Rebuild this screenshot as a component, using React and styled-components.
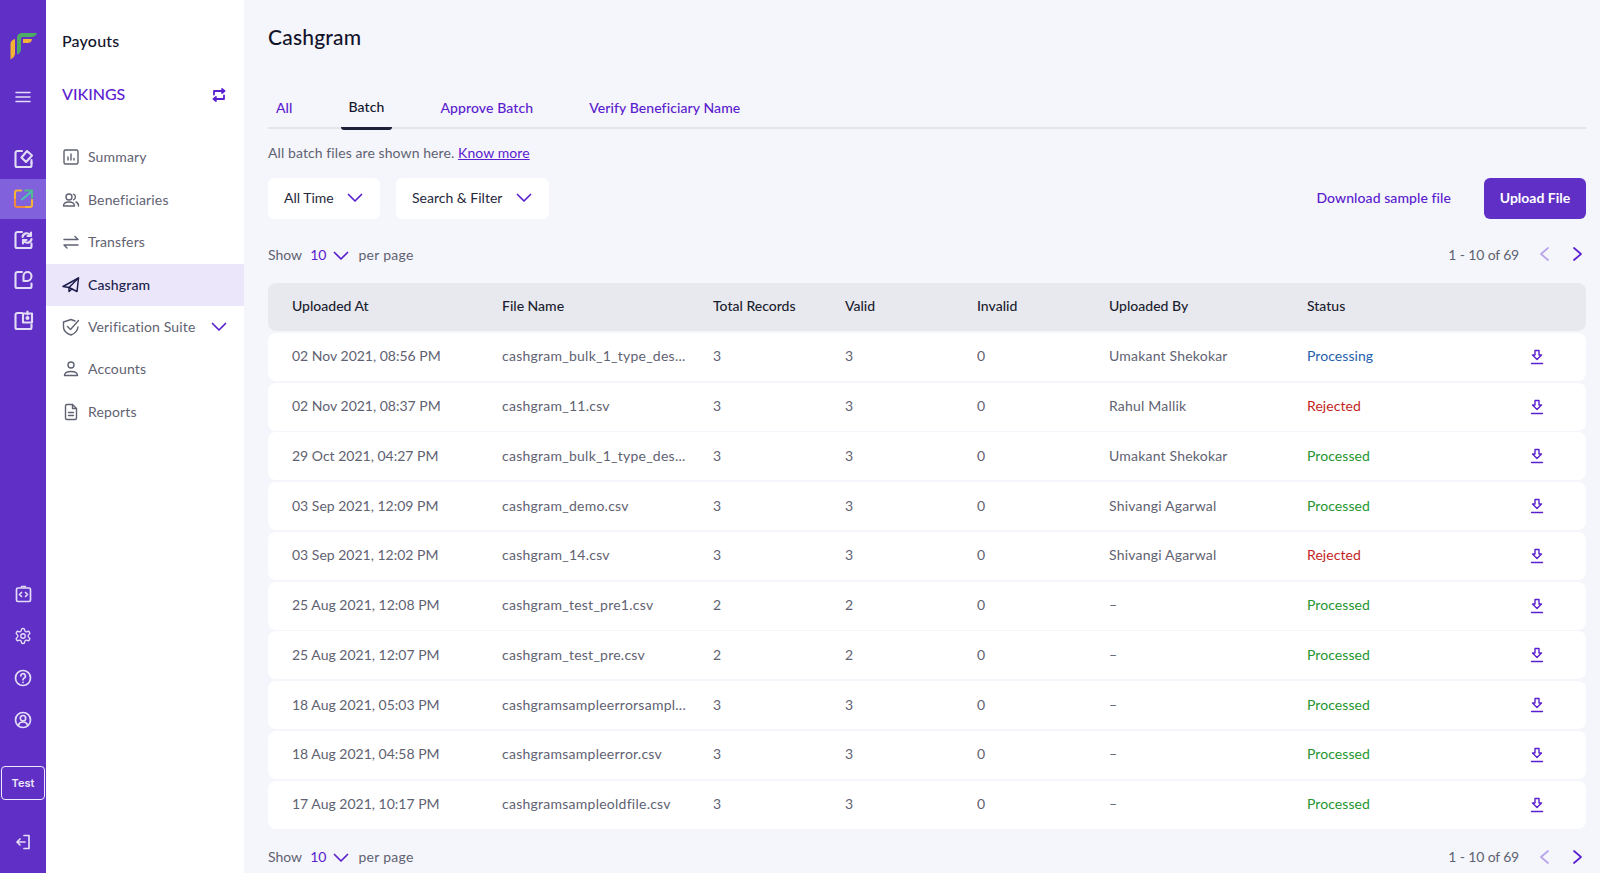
import React from "react";
import styled, { createGlobalStyle } from "styled-components";

const PURPLE = "#5a20cf";
const GREY = "#5f6272";
const DARK = "#12142b";
const RAIL = "#6030c6";

const Global = createGlobalStyle`
  html, body { margin: 0; padding: 0; height: 100%; overflow: hidden; background: #f5f6fb; }
  body { font-family: Lato, "Open Sans", sans-serif; font-size: 14px; color: ${GREY}; }
  * { box-sizing: border-box; }
`;

const Page = styled.div`display: flex; height: 873px; width: 1600px; overflow: hidden;`;

const Rail = styled.aside`
  width: 46px; flex: none; background: ${RAIL}; display: flex; flex-direction: column; align-items: center;
  padding-top: 32px; color: #e3dcf6;
`;
const LogoBox = styled.div`height: 28px; display: flex; margin-bottom: 27px;`;
const RailGroup = styled.div`display: flex; flex-direction: column; width: 100%; margin-top: ${p => p.$top}px;`;
const RailItem = styled.div`
  height: ${p => p.$h}px; display: flex; align-items: center; justify-content: center;
  background: ${p => (p.$active ? "#8161dc" : "transparent")};
`;
const Burger = styled.div`height: 20px; display: flex; align-items: center;`;
const TestBox = styled.div`
  width: 44px; height: 34px; margin-top: 25px; border: 1.5px solid #efeafb; border-radius: 4px; color: #efeafb;
  font: 600 11px Inter, sans-serif; display: flex; align-items: center; justify-content: center;
`;
const LogoutBox = styled.div`margin-top: 34px; display: flex;`;

const Side = styled.nav`width: 198px; flex: none; background: #fff; display: flex; flex-direction: column;`;
const SideTitle = styled.div`
  padding: 31px 0 0 16px; height: 73px; font-size: 16px; font-weight: 500; color: ${DARK}; line-height: 20px; letter-spacing: 0.2px;
`;
const Merchant = styled.div`
  display: flex; align-items: center; justify-content: space-between; padding: 0 18px 0 16px; height: 40px; margin-bottom: 23px;
  color: ${PURPLE}; font-size: 16px; font-weight: 500;
`;
const SwapIcon = styled.span`display: flex; padding-top: 3px;`;
const NavItem = styled.div`
  height: ${p => p.$h || 42.5}px; display: flex; align-items: center; padding: 0 17px 0 16px; gap: 8px;
  background: ${p => (p.$active ? "#ece6fb" : "transparent")};
  color: ${p => (p.$active ? "#1b1d4a" : GREY)}; font-weight: ${p => (p.$active ? 500 : 400)};
`;
const NavLabel = styled.span`flex: 1; font-size: 14px; letter-spacing: 0.15px; padding-bottom: 1px;`;

const Main = styled.main`flex: 1; min-width: 0; padding: 0 14px 0 24px; display: flex; flex-direction: column;`;
const Title = styled.h1`margin: 0; padding-top: 24px; height: 89px; font-size: 21px; line-height: 25px; font-weight: 500; color: ${DARK}; letter-spacing: 0.2px;`;
const Tabs = styled.div`display: flex; gap: 40px; height: 40px; border-bottom: 2px solid #e4e5ea;`;
const Tab = styled.div`
  padding: ${p => (p.$active ? "9px 8px 0" : "10px 8px 0")}; height: 41px; font-size: 14px; line-height: 18px;
  color: ${p => (p.$active ? DARK : PURPLE)}; font-weight: 500; letter-spacing: 0.1px;
  border-bottom: 3px solid ${p => (p.$active ? "#1e2038" : "transparent")};
  border-radius: 0 0 3px 3px;
`;
const Hint = styled.div`margin-top: 14px; height: 20px; line-height: 20px; font-size: 14px; color: ${GREY}; letter-spacing: 0.09px;`;
const HintLink = styled.a`color: ${PURPLE}; text-decoration: underline;`;
const Toolbar = styled.div`display: flex; align-items: center; margin-top: 15px; height: 41px;`;
const Filter = styled.div`
  width: ${p => p.$w}px; height: 41px; margin-right: 16px; background: #fff; border-radius: 6px;
  display: flex; align-items: center; justify-content: space-between; padding: 0 17px 1px 16px; color: #26283c; font-size: 14px;
`;
const FilterText = styled.span`padding-bottom: 2px;`;
const Spacer = styled.div`flex: 1;`;
const SampleLink = styled.a`color: ${PURPLE}; font-weight: 500; font-size: 14px; margin-right: 33px; padding-bottom: 2px; letter-spacing: 0.08px;`;
const UploadButton = styled.button`
  width: 102px; height: 41px; border: 0; border-radius: 6px; background: ${RAIL}; color: #fff;
  font: 700 14px Lato, sans-serif; padding: 0 0 2px;
`;
const Pager = styled.div`
  display: flex; align-items: center; height: 20px; margin-top: ${p => p.$top}px; font-size: 14px; color: ${GREY};
`;
const PageSize = styled.span`color: ${PURPLE}; margin: 0 7px 0 8px;`;
const PagerChevron = styled.span`display: flex; padding-top: 3px;`;
const PerPage = styled.span`margin-left: 9px; letter-spacing: 0.3px;`;
const Range = styled.span`margin-right: 20px; letter-spacing: -0.25px; word-spacing: 0.3px;`;
const Arrows = styled.div`display: flex; gap: 22px; padding-right: 3px;`;

const Table = styled.div`display: flex; flex-direction: column; margin-top: 19px;`;
const cols = "210px 211px 132px 132px 132px 198px 223px 1fr";
const Head = styled.div`
  display: grid; grid-template-columns: ${cols}; align-items: center; height: 48px; padding: 0 0 3px 24px;
  background: #e8e9ee; border-radius: 8px; color: #1b1d30; font-weight: 500; font-size: 14px;
`;
const Row = styled.div`
  display: grid; grid-template-columns: ${cols}; align-items: center; height: 48px; margin-top: 1.75px; padding: 0 0 2px 24px;
  background: #fff; border-radius: 8px; font-size: 14px; color: ${GREY};
`;
const FileName = styled.span`letter-spacing: 0.25px; white-space: nowrap;`;
const Person = styled.span`letter-spacing: 0.2px;`;
const STATUS = { Processing: "#1f5fae", Rejected: "#c41f1f", Processed: "#24962f" };
const Status = styled.span`color: ${p => STATUS[p.$s]}; letter-spacing: 0.06px;`;
const DownloadCell = styled.span`display: flex; padding-top: 2px;`;

const Stroke = styled.svg`display: block; flex: none;`;
const S = ({ w = 18, h = 18, vb, c = "currentColor", sw = 1.5, children }) => (
  <Stroke width={w} height={h} viewBox={vb || `0 0 ${w} ${h}`} fill="none" stroke={c} strokeWidth={sw} strokeLinecap="round" strokeLinejoin="round">
    {children}
  </Stroke>
);

const Chevron = ({ w = 16 }) => (
  <S w={w} h={10} sw={1.7} c={PURPLE}><path d={`M1.5 1.5 L${w / 2} 8 L${w - 1.5} 1.5`} /></S>
);
const Arrow = ({ left, dim }) => (
  <S w={11} h={16} sw={1.7} c={dim ? "#b7a4ea" : PURPLE}>
    <path d={left ? "M9 2 L2 8 L9 14" : "M2 2 L9 8 L2 14"} />
  </S>
);
const Download = () => (
  <S w={14} h={16} sw={1.4} c={PURPLE}>
    <path d="M5 1.5h4v4.5h2.5L7 10.5 2.5 6H5z" />
    <path d="M1.5 14.5h11" />
  </S>
);

const Logo = () => (
  <svg width="27" height="28" viewBox="0 0 27 28">
    <path d="M0.5 12 C0.5 9.5 2 8 5 7 V22 C4.5 24.5 3 26 0.5 27.5Z" fill="#f5b335" />
    <path d="M7 6.5 C7 2.5 9 1 13 1 H27 C26 3.5 24.5 5 21 5 H13 C11.5 5 11 5.5 11 7 V17 C11 20 9.5 21.5 7 22.5Z" fill="#4dab67" />
    <path d="M13 7 H22 C21.5 10 20 11 17 11 H13Z" fill="#f5b335" />
  </svg>
);

const Sheet = ({ children }) => (
  <S w={21} h={21} sw={2.1}>
    <path d="M9 3H4.5A2 2 0 0 0 2.500 5v12.500a1.500 1.500 0 0 0 1.500 1.500h13a1.500 1.500 0 0 0 1.500-1.500V14.500" />
    {children}
  </S>
);

const RailIcons = [
  <Sheet key="a"><path d="M8.500 9.500L14 3l5 4.500-6 6.500z" /><path d="M18.500 12v3" /></Sheet>,
  <S key="b" w={21} h={21} sw={2.1}>
    <path d="M8 2.500H4a2 2 0 0 0-2 2v7" stroke="#f5b335" />
    <path d="M2 11.500V17a2 2 0 0 0 2 2h9" stroke="#f0883e" />
    <path d="M13 19h4a2 2 0 0 0 2-2v-5" stroke="#f5b335" />
    <path d="M12 2.500h7v7" stroke="#4dbb8a" />
    <path d="M18 4L9 11.500" stroke="#4dc4b0" />
  </S>,
  <Sheet key="c">
    <path d="M9.500 8a4.300 4.300 0 0 1 8-1.500M18.500 10a4.300 4.300 0 0 1-8 1.500" />
    <path d="M18 3.500V7h-3.500M10 14.500V11h3.500" />
  </Sheet>,
  <Sheet key="d"><path d="M10.500 12V7a4 4 0 0 1 8 0c0 3-2 5-4.500 5z" /></Sheet>,
  <Sheet key="e"><path d="M10 3.500h9v9h-9z" /><path d="M14.500 1.500v3" /><circle cx="14.500" cy="8" r="1" /></Sheet>,
];

const Bottoms = [
  <S key="code" w={17} h={18} sw={1.7}>
    <rect x="1.500" y="3" width="14" height="13.500" rx="1.500" />
    <path d="M6.500 1.500h4M6.500 7.500l-2 2 2 2M10.500 7.500l2 2-2 2" />
  </S>,
  <S key="gear" w={18} h={18} sw={1.8} vb="0 0 24 24">
    <circle cx="12" cy="12" r="3" />
    <path d="M12.220 2h-.440a2 2 0 0 0-2 2v.180a2 2 0 0 1-1 1.730l-.430.250a2 2 0 0 1-2 0l-.150-.080a2 2 0 0 0-2.730.730l-.220.380a2 2 0 0 0 .730 2.730l.150.100a2 2 0 0 1 1 1.720v.510a2 2 0 0 1-1 1.740l-.150.090a2 2 0 0 0-.730 2.730l.220.380a2 2 0 0 0 2.730.730l.150-.080a2 2 0 0 1 2 0l.430.250a2 2 0 0 1 1 1.730V20a2 2 0 0 0 2 2h.440a2 2 0 0 0 2-2v-.180a2 2 0 0 1 1-1.730l.430-.250a2 2 0 0 1 2 0l.150.080a2 2 0 0 0 2.730-.730l.220-.390a2 2 0 0 0-.730-2.730l-.150-.080a2 2 0 0 1-1-1.740v-.500a2 2 0 0 1 1-1.740l.150-.090a2 2 0 0 0 .730-2.730l-.220-.380a2 2 0 0 0-2.730-.730l-.150.080a2 2 0 0 1-2 0l-.430-.250a2 2 0 0 1-1-1.730V4a2 2 0 0 0-2-2z" />
  </S>,
  <S key="help" w={18} h={18} sw={1.7}>
    <circle cx="9" cy="9" r="7.500" />
    <path d="M6.800 7a2.300 2.300 0 1 1 3.400 2c-.8.500-1.200 1-1.200 1.800" />
    <path d="M9 13.300v.1" />
  </S>,
  <S key="user" w={18} h={18} sw={1.7}>
    <circle cx="9" cy="9" r="7.500" />
    <circle cx="9" cy="7.200" r="2.700" />
    <path d="M4.500 14c.5-2 2.300-3 4.500-3s4 1 4.500 3" />
  </S>,
];

const c = "#5f6272";
const NavIcons = {
  summary: <S c={c} sw={1.4}><rect x="2" y="2" width="14" height="14" rx="1.500" /><path d="M6 12V9M9 12V6M12 12v-1.500" /></S>,
  bene: <S c={c} sw={1.4}>
    <circle cx="7" cy="6" r="3" />
    <path d="M1.500 15c0-2.500 2.500-4 5.500-4s5.500 1.500 5.500 4z" />
    <path d="M11.500 3.200a3 3 0 0 1 0 5.600M14 11c1.500.6 2.500 2 2.500 4" />
  </S>,
  transfers: <S c={c} sw={1.4}><path d="M2 6.500h14l-3-3M16 12H2l3 3" /></S>,
  cash: <S c="#1b1d4a" sw={1.5}><path d="M16.500 2L1 10.500 7 11.500 15 15.500z" /><path d="M16.500 2L7 11.500V15.500l3-2.500" /></S>,
  verify: <S c={c} sw={1.4}>
    <path d="M13 3L9 1.500 1.500 4v5c0 3.800 3 6.500 7.500 8 4-1.500 6.500-4 7-8" />
    <path d="M5.500 8.500l3 3L16.500 2.500" />
  </S>,
  accounts: <S c={c} sw={1.4}><circle cx="9" cy="5" r="3" /><path d="M2.500 15.500c0-3 2-4 6.500-4s6.500 1 6.500 4z" /></S>,
  reports: <S c={c} sw={1.4}>
    <path d="M3.500 3a1.500 1.500 0 0 1 1.500-1.500h5.500l4 4V15a1.500 1.500 0 0 1-1.500 1.500H5A1.500 1.500 0 0 1 3.500 15z" />
    <path d="M10.500 1.500v4h4M6.500 9.500h5M6.500 12.500h5" />
  </S>,
};

const nav = [
  ["Summary", "summary"],
  ["Beneficiaries", "bene"],
  ["Transfers", "transfers"],
  ["Cashgram", "cash", true],
  ["Verification Suite", "verify", false, true],
  ["Accounts", "accounts"],
  ["Reports", "reports"],
];

const rows = [
  ["02 Nov 2021, 08:56 PM", "cashgram_bulk_1_type_des...", 3, 3, 0, "Umakant Shekokar", "Processing"],
  ["02 Nov 2021, 08:37 PM", "cashgram_11.csv", 3, 3, 0, "Rahul Mallik", "Rejected"],
  ["29 Oct 2021, 04:27 PM", "cashgram_bulk_1_type_des...", 3, 3, 0, "Umakant Shekokar", "Processed"],
  ["03 Sep 2021, 12:09 PM", "cashgram_demo.csv", 3, 3, 0, "Shivangi Agarwal", "Processed"],
  ["03 Sep 2021, 12:02 PM", "cashgram_14.csv", 3, 3, 0, "Shivangi Agarwal", "Rejected"],
  ["25 Aug 2021, 12:08 PM", "cashgram_test_pre1.csv", 2, 2, 0, "–", "Processed"],
  ["25 Aug 2021, 12:07 PM", "cashgram_test_pre.csv", 2, 2, 0, "–", "Processed"],
  ["18 Aug 2021, 05:03 PM", "cashgramsampleerrorsampl...", 3, 3, 0, "–", "Processed"],
  ["18 Aug 2021, 04:58 PM", "cashgramsampleerror.csv", 3, 3, 0, "–", "Processed"],
  ["17 Aug 2021, 10:17 PM", "cashgramsampleoldfile.csv", 3, 3, 0, "–", "Processed"],
];

const PagerRow = ({ top }) => (
  <Pager $top={top}>
    Show<PageSize>10</PageSize><PagerChevron><Chevron /></PagerChevron>
    <PerPage>per page</PerPage>
    <Spacer />
    <Range>1 - 10 of 69</Range>
    <Arrows><Arrow left dim /><Arrow /></Arrows>
  </Pager>
);

export default function App() {
  return (
    <Page>
      <Global />
      <Rail>
        <LogoBox><Logo /></LogoBox>
        <Burger>
          <S w={16} h={12} sw={1.500}><path d="M1 1.500h14M1 6h14M1 10.500h14" /></S>
        </Burger>
        <RailGroup $top={31}>
          {RailIcons.map((ic, i) => <RailItem key={i} $h={40.5} $active={i === 1}>{ic}</RailItem>)}
        </RailGroup>
        <RailGroup $top={232}>
          {Bottoms.map((ic, i) => <RailItem key={i} $h={42}>{ic}</RailItem>)}
        </RailGroup>
        <TestBox>Test</TestBox>
        <LogoutBox>
          <S w={16} h={16} sw={1.7}><path d="M9 1.500h5v13H9M10 8H2M5 5L2 8l3 3" /></S>
        </LogoutBox>
      </Rail>
      <Side>
        <SideTitle>Payouts</SideTitle>
        <Merchant>
          VIKINGS
          <SwapIcon>
            <S w={14} h={14} sw={1.8} c={PURPLE}>
              <path d="M2 6.500V3h10.500M10 1l2.500 2L10 5M12 7.500V11H1.500M4 9L1.500 11 4 13" />
            </S>
          </SwapIcon>
        </Merchant>
        {nav.map(([label, icon, active, more]) => (
          <NavItem key={label} $active={active} $h={active ? 42 : 42.5}>
            {NavIcons[icon]}
            <NavLabel>{label}</NavLabel>
            {more && <Chevron />}
          </NavItem>
        ))}
      </Side>
      <Main>
        <Title>Cashgram</Title>
        <Tabs>
          <Tab>All</Tab>
          <Tab $active>Batch</Tab>
          <Tab>Approve Batch</Tab>
          <Tab>Verify Beneficiary Name</Tab>
        </Tabs>
        <Hint>All batch files are shown here. <HintLink>Know more</HintLink></Hint>
        <Toolbar>
          <Filter $w={112}><FilterText>All Time</FilterText><Chevron /></Filter>
          <Filter $w={153}><FilterText>Search &amp; Filter</FilterText><Chevron /></Filter>
          <Spacer />
          <SampleLink>Download sample file</SampleLink>
          <UploadButton>Upload File</UploadButton>
        </Toolbar>
        <PagerRow top={25} />
        <Table>
          <Head>
            <span>Uploaded At</span><span>File Name</span><span>Total Records</span><span>Valid</span>
            <span>Invalid</span><span>Uploaded By</span><span>Status</span><span />
          </Head>
          {rows.map((r, i) => (
            <Row key={i}>
              <span>{r[0]}</span>
              <FileName>{r[1]}</FileName>
              <span>{r[2]}</span><span>{r[3]}</span><span>{r[4]}</span><Person>{r[5]}</Person>
              <Status $s={r[6]}>{r[6]}</Status>
              <DownloadCell><Download /></DownloadCell>
            </Row>
          ))}
        </Table>
        <PagerRow top={18} />
      </Main>
    </Page>
  );
}
